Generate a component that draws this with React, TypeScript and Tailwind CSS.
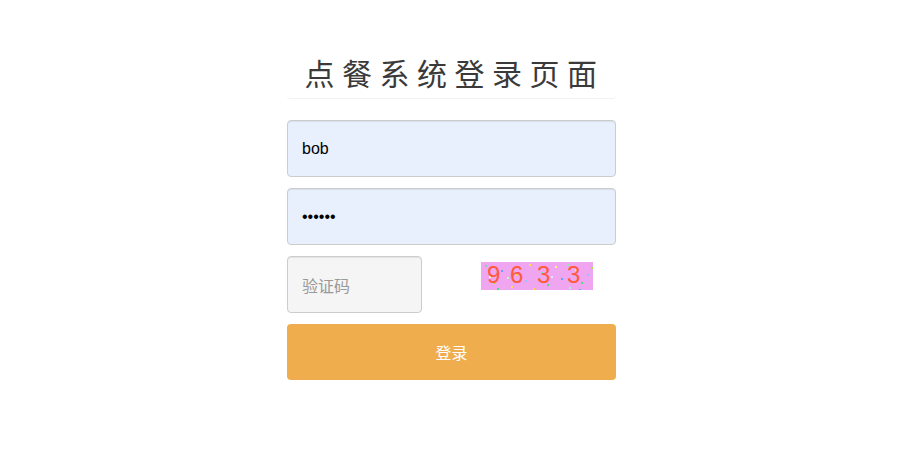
import React from "react"

const dots = [
  [4, 3, "#7dd3a8"], [12, 20, "#a3e635"], [20, 8, "#60a5fa"], [30, 24, "#fde047"], [38, 5, "#86efac"],
  [44, 18, "#93c5fd"], [52, 26, "#fcd34d"], [60, 10, "#6ee7b7"], [66, 22, "#4ade80"], [74, 4, "#fef08a"],
  [80, 16, "#60a5fa"], [88, 25, "#a7f3d0"], [94, 7, "#fde68a"], [100, 20, "#4ade80"], [106, 12, "#93c5fd"],
  [8, 14, "#fef9c3"], [26, 15, "#bbf7d0"], [48, 2, "#fde047"], [70, 14, "#dbeafe"], [86, 2, "#86efac"],
  [16, 26, "#4ade80"], [58, 17, "#fef08a"], [98, 27, "#60a5fa"], [34, 12, "#fcd34d"], [110, 5, "#a3e635"],
] as const

function Captcha() {
  return (
    <div className="relative w-[112px] h-[28px] bg-[#efa5ef] overflow-hidden">
      {dots.map(([x, y, c], i) => (
        <span
          key={i}
          className="absolute w-[2px] h-[2px]"
          style={{ left: x, top: y, backgroundColor: c }}
        />
      ))}
      <div className="absolute left-[6px] top-[-3px] flex text-[24px] text-[#ff5a3a] font-['Liberation_Sans',sans-serif] leading-[32px]">
        <span className="w-[23px]">9</span>
        <span className="w-[27px]">6</span>
        <span className="w-[30px]">3</span>
        <span>3</span>
      </div>
    </div>
  )
}

export default function App() {
  return (
    <div className="w-[897px] h-[469px] bg-white font-['Liberation_Sans','Noto_Sans_CJK_SC',sans-serif]">
      <div className="w-[329px] ml-[287px] pt-[52px]">
        <div className="h-[47px] border-b border-[#f2f2f2] rounded-b-[4px] flex justify-center">
          <h1 className="text-[30px] leading-[40px] tracking-[7.5px] text-[#3a3a3a] pl-[6px] font-['Noto_Sans_CJK_SC',sans-serif] font-normal">
            点餐系统登录页面
          </h1>
        </div>
        <div className="mt-[21px] flex flex-col gap-[11px]">
          <input
            defaultValue="bob"
            className="h-[57px] w-full rounded-[4px] border border-[#ccc] bg-[#e8f0fe] px-[14px] text-[16px] text-black outline-none shadow-[inset_0_1px_1px_rgba(0,0,0,0.075)]"
          />
          <input
            type="password"
            defaultValue="123456"
            className="h-[57px] w-full rounded-[4px] border border-[#ccc] bg-[#e8f0fe] px-[14px] text-[16px] text-black outline-none shadow-[inset_0_1px_1px_rgba(0,0,0,0.075)]"
          />
          <div className="flex items-start">
            <input
              placeholder="验证码"
              className="h-[57px] w-[135px] rounded-[4px] border border-[#ccc] bg-[#f5f5f5] px-[14px] text-[16px] text-black placeholder:text-[#999] outline-none shadow-[inset_0_1px_1px_rgba(0,0,0,0.075)] font-['Noto_Sans_CJK_SC',sans-serif]"
            />
            <div className="ml-[59px] mt-[6px]">
              <Captcha />
            </div>
          </div>
          <button className="h-[56px] w-full rounded-[4px] bg-[#f0ad4e] text-white text-[16px] font-['Noto_Sans_CJK_SC',sans-serif]">
            登录
          </button>
        </div>
      </div>
    </div>
  )
}
